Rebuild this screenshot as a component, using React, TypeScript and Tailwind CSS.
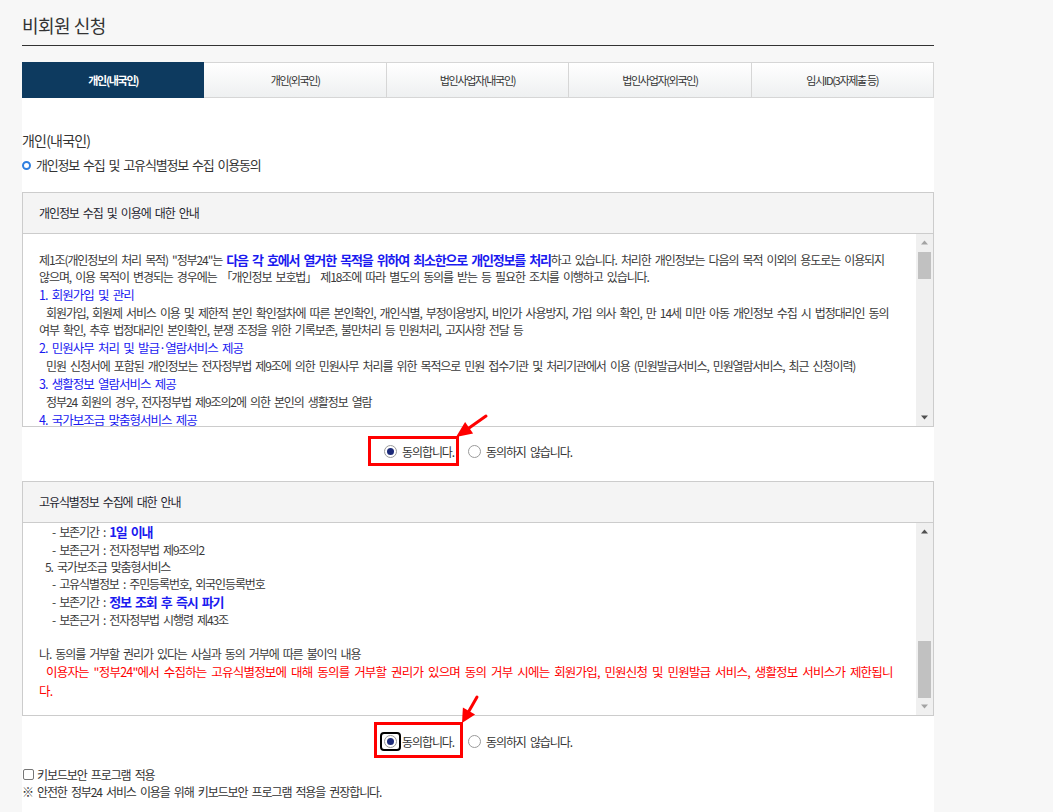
import React from "react";

const FONT = "font-['Noto_Sans_CJK_KR','Noto_Sans_CJK_SC',sans-serif]";
const BODY = "text-[12px] tracking-[-1.1px] [word-spacing:2.5px]";
const LINE = "whitespace-nowrap h-[17px] leading-[17px]";
const HEAD = "whitespace-nowrap h-[19px] leading-[19px] text-[12.5px] tracking-[-1px] [word-spacing:2.5px] text-[#1a1af0]";
const BLUEB = "text-[13px] tracking-[-1.2px] [word-spacing:2.5px] font-bold text-[#1a1af0]";

function TriUp({ color }: { color: string }) {
  return (
    <svg width="17" height="17" viewBox="0 0 17 17">
      <polygon points="5,10.5 12,10.5 8.5,6.5" fill={color} />
    </svg>
  );
}
function TriDown({ color }: { color: string }) {
  return (
    <svg width="17" height="17" viewBox="0 0 17 17">
      <polygon points="5,6.5 12,6.5 8.5,10.5" fill={color} />
    </svg>
  );
}

function ScrollTop() {
  return (
    <div className="w-[17px] h-full bg-[#f0f0f0] flex flex-col">
      <TriUp color="#a3a3a3" />
      <div className="flex-1 flex flex-col">
        <div className="mt-[1px] mx-[2px] h-[27px] bg-[#c1c1c1]" />
      </div>
      <TriDown color="#505050" />
    </div>
  );
}

function ScrollBottom() {
  return (
    <div className="w-[17px] h-full bg-[#f0f0f0] flex flex-col">
      <TriUp color="#505050" />
      <div className="flex-1 flex flex-col justify-end">
        <div className="mx-[2px] h-[57px] bg-[#c1c1c1]" />
      </div>
      <TriDown color="#a3a3a3" />
    </div>
  );
}

function Box({
  title,
  children,
  scroll,
  className,
}: {
  title: string;
  children: React.ReactNode;
  scroll: React.ReactNode;
  className: string;
}) {
  return (
    <div className={"border border-[#cccccc] bg-white " + className}>
      <div className={"h-[41px] border-b border-[#cccccc] bg-[#f4f4f4] pl-[16px] flex items-center text-[#1f2630] " + BODY}>
        {title}
      </div>
      <div className="flex h-[192px]">
        <div className={"flex-1 overflow-hidden pl-[16px] text-[#3a3a3a] " + BODY}>{children}</div>
        {scroll}
      </div>
    </div>
  );
}

function Radio({ checked }: { checked: boolean }) {
  return (
    <span className="w-[13px] h-[13px] rounded-full border border-[#9a9a9a] bg-white flex items-center justify-center shrink-0">
      {checked && <span className="w-[7px] h-[7px] rounded-full bg-[#1c2a78]" />}
    </span>
  );
}

export default function App() {
  const tabs = ["개인(내국인)", "개인(외국인)", "법인사업자(내국인)", "법인사업자(외국인)", "임시ID(3자제출 등)"];
  return (
    <div className={"relative min-h-[812px] bg-[#f7f7f7] " + FONT}>
      <div className="ml-[22px] w-[912px]">
        {/* title */}
        <div className="pt-[13px] pb-[8px] border-b border-[#333333]">
          <div className="text-[18px] leading-[24px] tracking-[-0.5px] text-[#333333]">비회원 신청</div>
        </div>
        {/* tabs */}
        <div className="mt-[16px] grid grid-cols-5 h-[36px]">
          {tabs.map((t, i) =>
            i === 0 ? (
              <div
                key={t}
                className="flex items-center justify-center bg-[#0d3a5f] text-white font-bold text-[11px] tracking-[-1.3px]"
              >
                {t}
              </div>
            ) : (
              <div
                key={t}
                className="flex items-center justify-center border-t border-b border-r border-[#d6d6d6] bg-gradient-to-b from-white to-[#eef0f1] text-[#333333] text-[11px] tracking-[-1.3px]"
              >
                {t}
              </div>
            )
          )}
        </div>
        {/* content */}
        <div className="bg-white min-h-[714px]">
          <div className="pt-[32px] text-[14px] leading-[20px] tracking-[-0.8px] text-[#333333]">개인(내국인)</div>
          <div className="mt-[6px] h-[18px] flex items-center">
            <span className="w-[9px] h-[9px] rounded-full border-2 border-[#2f7fe0] mr-[5px]" />
            <span className="text-[13px] tracking-[-1.2px] [word-spacing:2.3px] text-[#333333]">
              개인정보 수집 및 고유식별정보 수집 이용동의
            </span>
          </div>

          <Box title="개인정보 수집 및 이용에 대한 안내" className="mt-[18px]" scroll={<ScrollTop />}>
            <div className="pt-[17px]">
              <div className={LINE}>
                제1조(개인정보의 처리 목적) "정부24"는{" "}
                <span className={BLUEB}>다음 각 호에서 열거한 목적을 위하여 최소한으로 개인정보를 처리</span>하고
                있습니다. 처리한 개인정보는 다음의 목적 이외의 용도로는 이용되지
              </div>
              <div className={LINE}>
                않으며, 이용 목적이 변경되는 경우에는 「개인정보 보호법」 제18조에 따라 별도의 동의를 받는 등 필요한
                조치를 이행하고 있습니다.
              </div>
              <div className={HEAD}>1. 회원가입 및 관리</div>
              <div className={LINE + " pl-[7px]"}>
                회원가입, 회원제 서비스 이용 및 제한적 본인 확인절차에 따른 본인확인, 개인식별, 부정이용방지, 비인가
                사용방지, 가입 의사 확인, 만 14세 미만 아동 개인정보 수집 시 법정대리인 동의
              </div>
              <div className={LINE}>
                여부 확인, 추후 법정대리인 본인확인, 분쟁 조정을 위한 기록보존, 불만처리 등 민원처리, 고지사항 전달 등
              </div>
              <div className={HEAD}>2. 민원사무 처리 및 발급·열람서비스 제공</div>
              <div className={LINE + " pl-[7px]"}>
                민원 신청서에 포함된 개인정보는 전자정부법 제9조에 의한 민원사무 처리를 위한 목적으로 민원 접수기관 및
                처리기관에서 이용 (민원발급서비스, 민원열람서비스, 최근 신청이력)
              </div>
              <div className={HEAD}>3. 생활정보 열람서비스 제공</div>
              <div className={LINE + " pl-[7px]"}>정부24 회원의 경우, 전자정부법 제9조의2에 의한 본인의 생활정보 열람</div>
              <div className={HEAD}>4. 국가보조금 맞춤형서비스 제공</div>
            </div>
          </Box>

          {/* radio row 1 */}
          <div className={"h-[48px] flex items-center justify-center text-[#333333] " + BODY}>
            <div className="relative flex items-center h-[17px]">
              <span className="absolute left-[-16px] top-[-7px] w-[91px] h-[30px] border-[3px] border-[#ff0000]" />
              <Radio checked />
              <span className="ml-[5px] leading-[17px]">동의합니다.</span>
            </div>
            <div className="ml-[14px] flex items-center h-[17px]">
              <Radio checked={false} />
              <span className="ml-[5px] leading-[17px]">동의하지 않습니다.</span>
            </div>
          </div>

          <Box title="고유식별정보 수집에 대한 안내" className="mt-[6px]" scroll={<ScrollBottom />}>
            <div>
              <div className="whitespace-nowrap h-[18px] leading-[18px] pl-[13px]">
                - 보존기간 : <span className={BLUEB}>1일 이내</span>
              </div>
              <div className={LINE + " pl-[13px]"}>- 보존근거 : 전자정부법 제9조의2</div>
              <div className={LINE + " pl-[6px]"}>5. 국가보조금 맞춤형서비스</div>
              <div className={LINE + " pl-[13px]"}>- 고유식별정보 : 주민등록번호, 외국인등록번호</div>
              <div className="whitespace-nowrap h-[19px] leading-[19px] pl-[13px]">
                - 보존기간 : <span className={BLUEB}>정보 조회 후 즉시 파기</span>
              </div>
              <div className={LINE + " pl-[13px]"}>- 보존근거 : 전자정부법 시행령 제43조</div>
              <div className="h-[17px]" />
              <div className={LINE}>나. 동의를 거부할 권리가 있다는 사실과 동의 거부에 따른 불이익 내용</div>
              <div className="whitespace-nowrap h-[19px] leading-[19px] pl-[7px] text-[12.5px] tracking-[-0.8px] [word-spacing:2.8px] text-[#ff0000]">
                이용자는 "정부24"에서 수집하는 고유식별정보에 대해 동의를 거부할 권리가 있으며 동의 거부 시에는
                회원가입, 민원신청 및 민원발급 서비스, 생활정보 서비스가 제한됩니
              </div>
              <div className="whitespace-nowrap h-[19px] leading-[19px] text-[12.5px] tracking-[-0.8px] text-[#ff0000]">다.</div>
            </div>
          </Box>

          {/* radio row 2 */}
          <div className={"h-[50px] flex items-center justify-center text-[#333333] " + BODY}>
            <div className="relative flex items-center h-[17px]">
              <span className="absolute left-[-10px] top-[-11px] w-[89px] h-[36px] border-[3px] border-[#ff0000]" />
              <span className="absolute left-[-4px] top-[-1px] w-[21px] h-[19px] border-2 border-black rounded-[4px]" />
              <Radio checked />
              <span className="ml-[5px] leading-[17px]">동의합니다.</span>
            </div>
            <div className="ml-[14px] flex items-center h-[17px]">
              <Radio checked={false} />
              <span className="ml-[5px] leading-[17px]">동의하지 않습니다.</span>
            </div>
          </div>

          <div className={"h-[17px] flex items-center text-[#333333] " + BODY}>
            <span className="ml-[1px] w-[11px] h-[11px] border border-[#767676] rounded-[2px] bg-white mr-[3px]" />
            <span className="leading-[17px]">키보드보안 프로그램 적용</span>
          </div>
          <div className={"h-[17px] leading-[17px] whitespace-nowrap text-[#333333] " + BODY}>
            ※ 안전한 정부24 서비스 이용을 위해 키보드보안 프로그램 적용을 권장합니다.
          </div>
        </div>
      </div>

      {/* annotation arrows */}
      <svg
        className="absolute top-0 left-0 pointer-events-none"
        width="1053"
        height="812"
        viewBox="0 0 1053 812"
      >
        <line x1="486" y1="416" x2="469" y2="428" stroke="#ff0000" strokeWidth="3" strokeLinecap="round" />
        <polygon points="456,437 473.1,433.5 465.1,422.1" fill="#ff0000" />
        <line x1="477" y1="697" x2="469" y2="711" stroke="#ff0000" strokeWidth="3" strokeLinecap="round" />
        <polygon points="462,723 475.1,714.4 462.9,707.4" fill="#ff0000" />
      </svg>
    </div>
  );
}
